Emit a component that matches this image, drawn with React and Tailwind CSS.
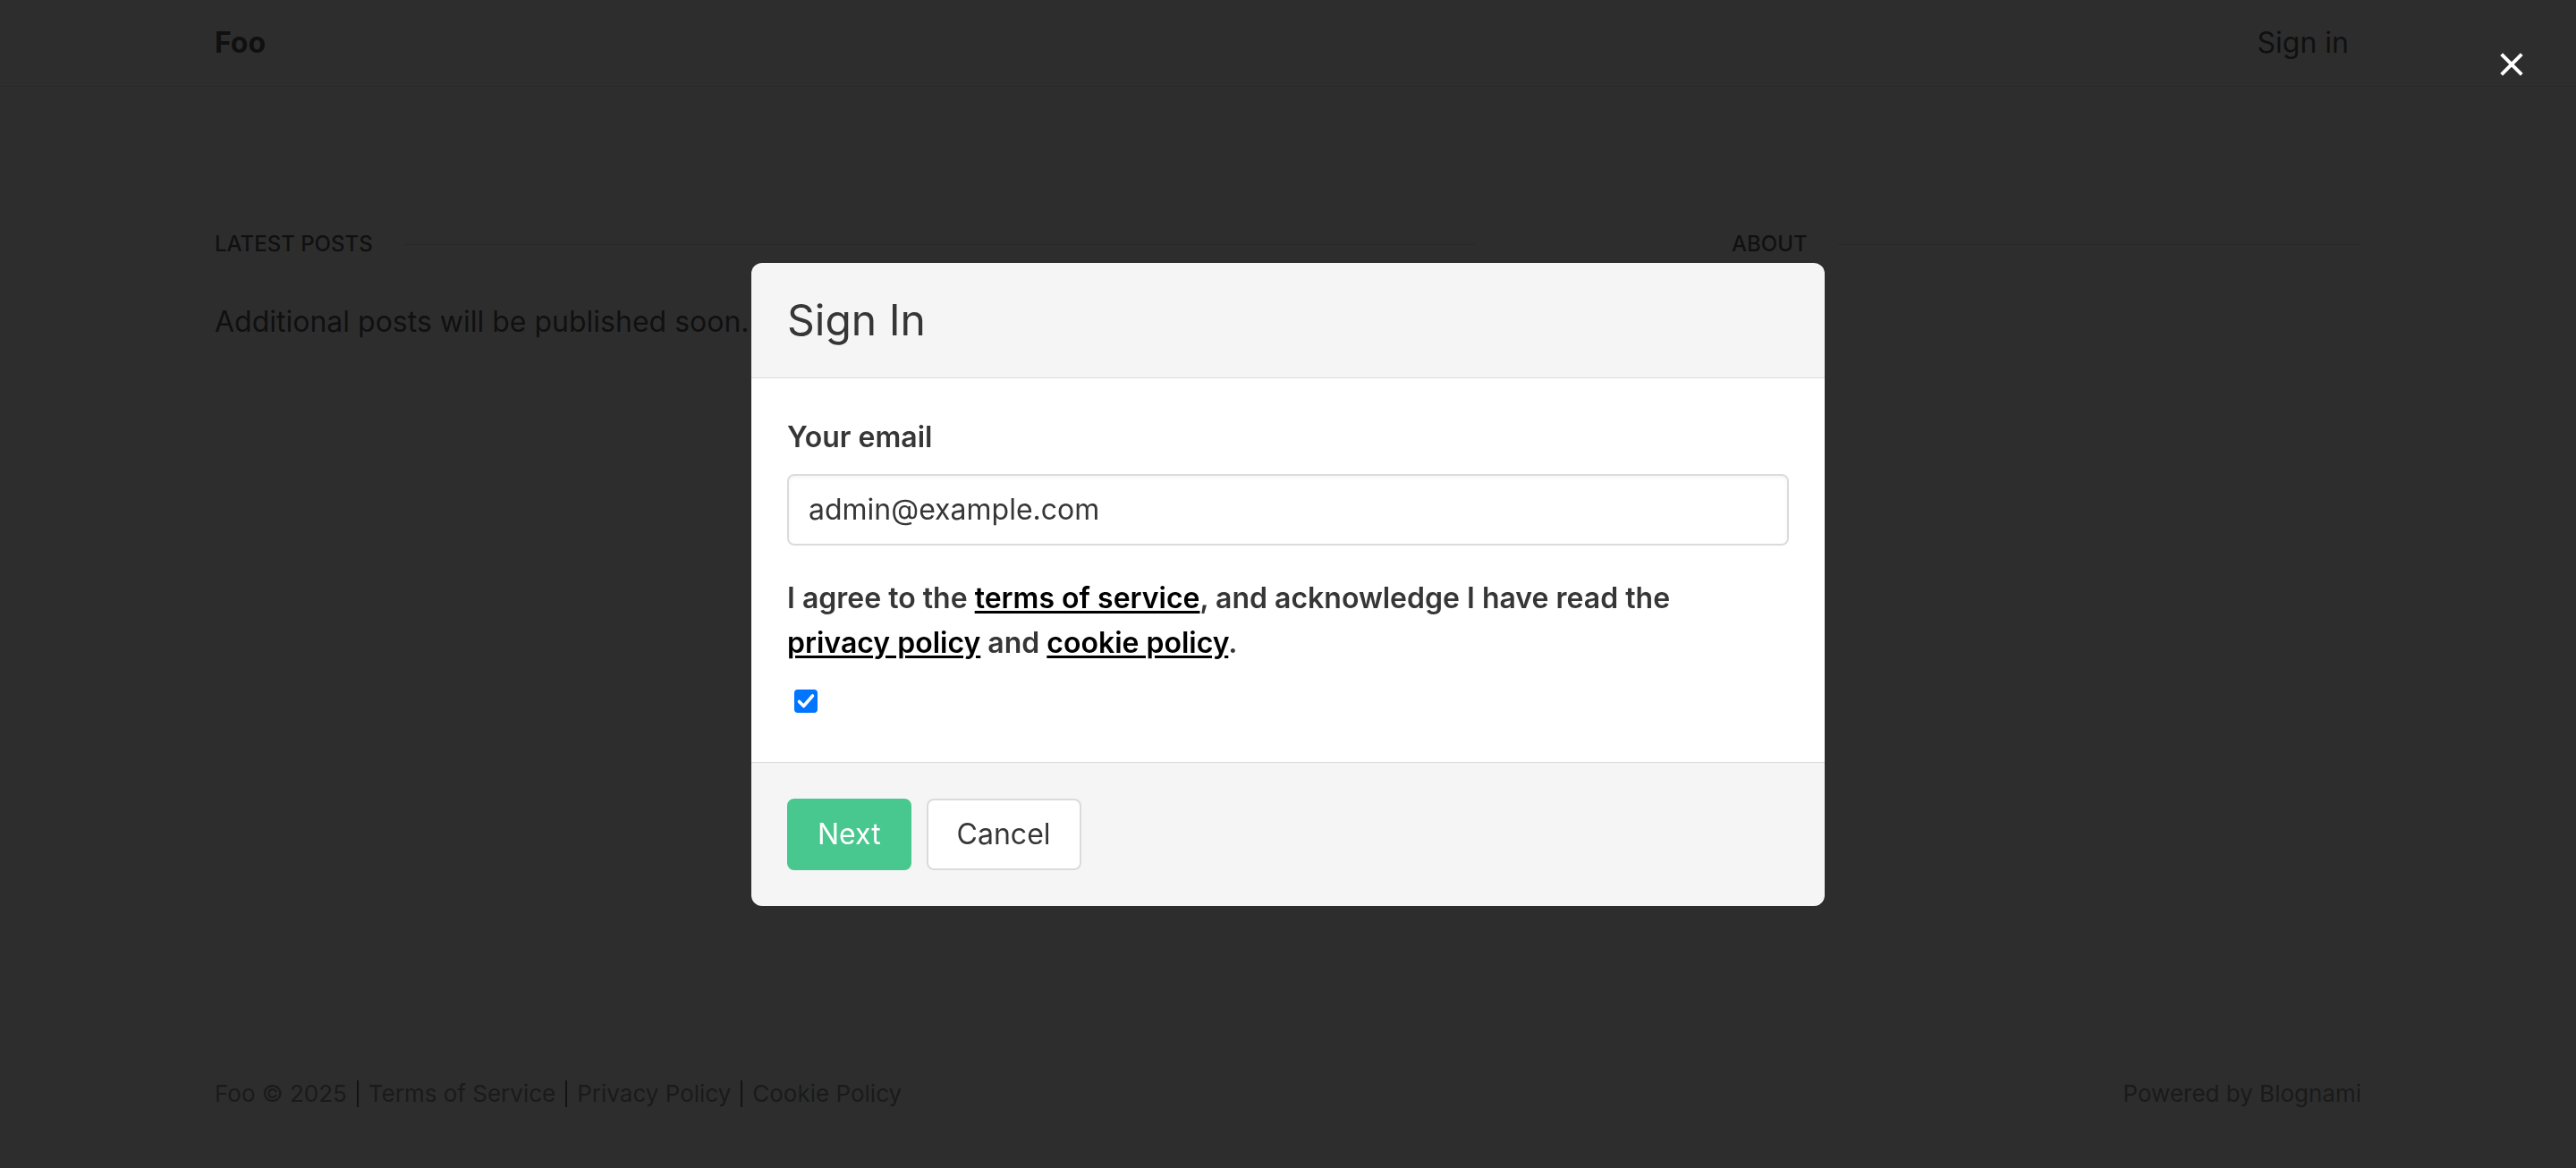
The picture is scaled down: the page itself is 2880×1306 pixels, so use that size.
import React from "react";

const Separator = () => (
    <span className="inline-block h-[30px] border-l-2 border-[#4a4a4a] ml-[11px] mr-[11px]" />
);

const SectionHeading = ({ children }) => (
    <div className="flex items-center gap-[34px]">
        <span className="text-[24px] leading-[36px] font-medium uppercase text-[#363636]">
            {children}
        </span>
        <div className="flex-1 h-px bg-[#d6d6d6]" />
    </div>
);

const SignInModal = () => {
    return (
        <div className="w-[1200px] rounded-[12px] overflow-hidden">
            <header className="bg-[#f5f5f5] p-[40px] border-b border-[#dbdbdb]">
                <h1 className="text-[48px] leading-[48px] text-[#363636]">Sign In</h1>
            </header>

            <section className="bg-white px-[40px] pt-[42px] pb-[55px]">
                <label className="block text-[32px] leading-[48px] font-semibold text-[#363636] mb-[17px]">
                    Your email
                </label>
                <input
                    type="email"
                    readOnly
                    defaultValue="admin@example.com"
                    className="block w-full h-[80px] px-[22px] border-2 border-[#dbdbdb] rounded-[8px] bg-white text-[32px] text-[#363636] shadow-[inset_0_2px_4px_rgba(10,10,10,0.05)] outline-none"
                />
                <p className="mt-[34px] text-[32px] leading-[50px] font-semibold text-[#363636]">
                    I agree to the{" "}
                    <a className="text-black underline decoration-[3px] underline-offset-[3px]">
                        terms of service
                    </a>
                    , and acknowledge I have read the
                    <br />
                    <a className="text-black underline decoration-[3px] underline-offset-[3px]">
                        privacy policy
                    </a>{" "}
                    and{" "}
                    <a className="text-black underline decoration-[3px] underline-offset-[3px]">
                        cookie policy
                    </a>
                    .
                </p>
                <div className="mt-[27px] ml-[8px] w-[26px] h-[26px] rounded-[4px] bg-[#0075ff] flex items-center justify-center">
                    <svg width="26" height="26" viewBox="0 0 26 26" fill="none">
                        <path
                            d="M5.5 13.5 L10.5 18.5 L20.5 7"
                            stroke="white"
                            strokeWidth="3.6"
                            strokeLinecap="round"
                            strokeLinejoin="round"
                        />
                    </svg>
                </div>
            </section>

            <footer className="bg-[#f5f5f5] border-t border-[#dbdbdb] p-[40px] flex gap-[17px]">
                <button className="h-[80px] px-[32px] rounded-[8px] border-2 border-transparent bg-[#48c78e] text-white text-[32px]">
                    Next
                </button>
                <button className="h-[80px] px-[32px] rounded-[8px] border-2 border-[#dbdbdb] bg-white text-[#363636] text-[32px]">
                    Cancel
                </button>
            </footer>
        </div>
    );
};

const App = () => {
    return (
        <div className="relative min-h-screen bg-white flex flex-col font-['Inter','Noto_Sans',sans-serif] text-[#363636]">
            <nav className="h-[97px] border-b border-[#e0e0e0]">
                <div className="w-[2400px] mx-auto h-full flex items-center justify-between">
                    <span className="text-[32px] leading-[48px] font-bold">Foo</span>
                    <span className="text-[32px] leading-[48px] mr-[14px]">Sign in</span>
                </div>
            </nav>

            <main className="w-[2400px] mx-auto pt-[158px] flex">
                <div className="w-[1410px]">
                    <SectionHeading>Latest posts</SectionHeading>
                    <p className="mt-[45px] text-[32px] leading-[48px]">
                        Additional posts will be published soon.
                    </p>
                </div>
                <div className="ml-auto w-[704px]">
                    <SectionHeading>About</SectionHeading>
                </div>
            </main>

            <footer className="mt-auto w-[2400px] mx-auto pb-[64px] flex items-center justify-between text-[26px] leading-[39px] text-[#7a7a7a]">
                <div className="flex items-center">
                    <span>Foo © 2025</span>
                    <Separator />
                    <a>Terms of Service</a>
                    <Separator />
                    <a>Privacy Policy</a>
                    <Separator />
                    <a>Cookie Policy</a>
                </div>
                <span>Powered by Blognami</span>
            </footer>

            {/* modal backdrop */}
            <div className="fixed inset-0 bg-[rgba(10,10,10,0.86)]" />

            <div className="fixed inset-0 flex items-center justify-center">
                <SignInModal />
            </div>

            <button className="fixed top-[40px] right-[40px] w-[64px] h-[64px] rounded-full flex items-center justify-center">
                <svg width="64" height="64" viewBox="0 0 64 64">
                    <path d="M20.7 20.7 L43.3 43.3 M43.3 20.7 L20.7 43.3" stroke="white" strokeWidth="4" />
                </svg>
            </button>
        </div>
    );
};

export default App;
